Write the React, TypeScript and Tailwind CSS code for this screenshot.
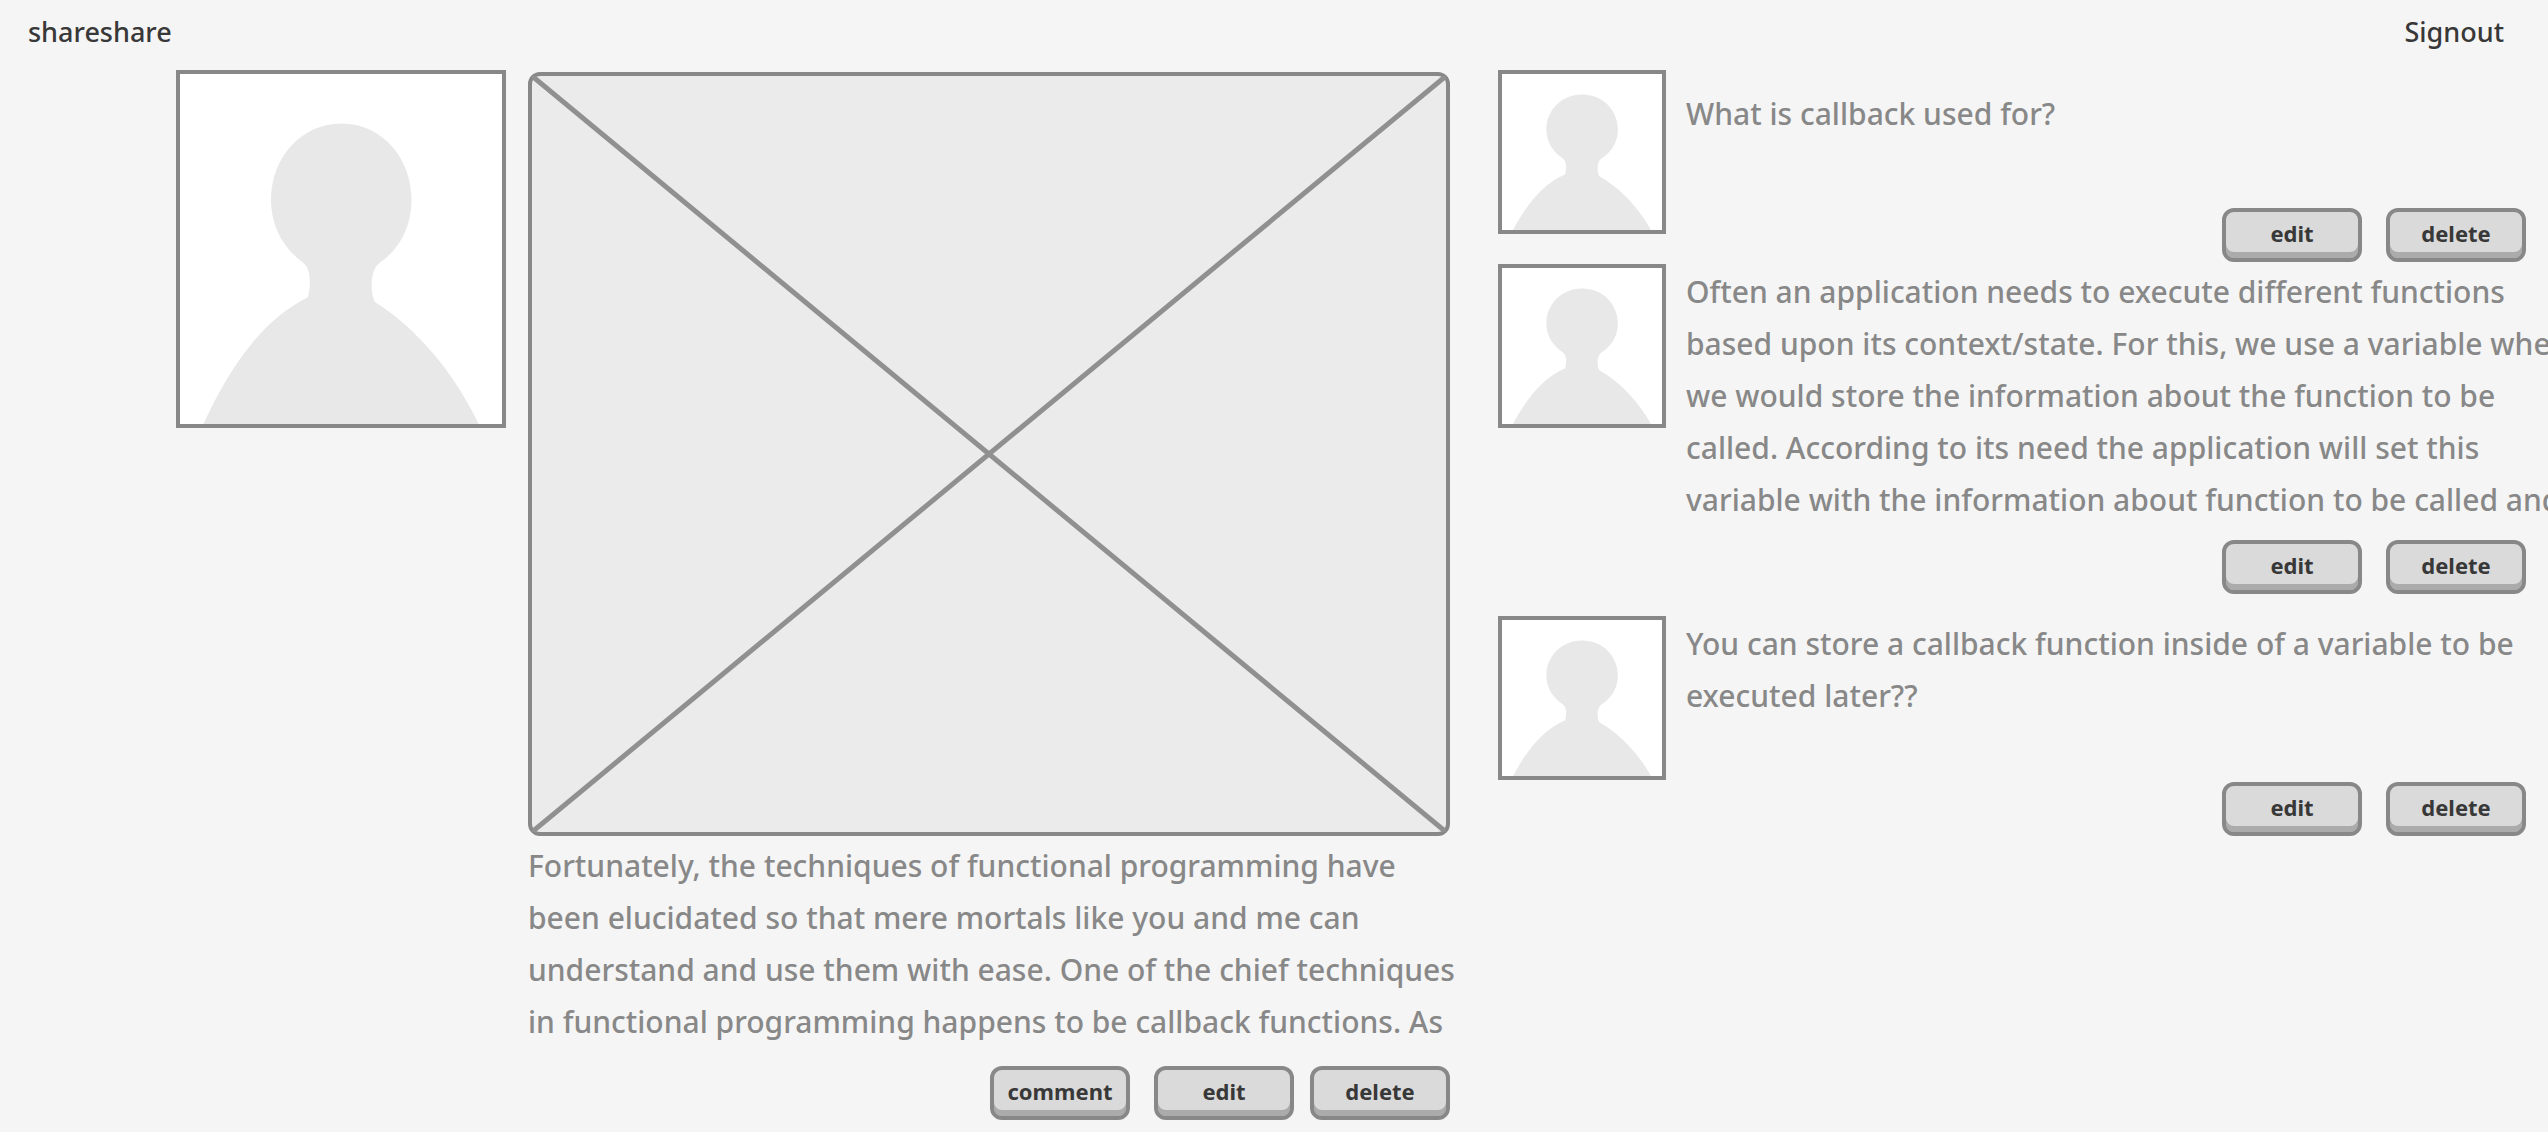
import type { ReactNode } from "react";
import clsx from "clsx";

type Comment = {
  text: string;
  articleClass: string;
  textClass: string;
};

const postText = `Fortunately, the techniques of functional programming have
been elucidated so that mere mortals like you and me can
understand and use them with ease. One of the chief techniques
in functional programming happens to be callback functions. As`;

const comments: Comment[] = [
  {
    text: "What is callback used for?",
    articleClass: "min-h-[192px] mb-0.5",
    textClass: "pt-[18px]",
  },
  {
    text: `Often an application needs to execute different functions
based upon its context/state. For this, we use a variable where
we would store the information about the function to be
called. According to its need the application will set this
variable with the information about function to be called and`,
    articleClass: "mb-[22px]",
    textClass: "pt-0.5 pb-3.5",
  },
  {
    text: `You can store a callback function inside of a variable to be
executed later??`,
    articleClass: "min-h-[220px]",
    textClass: "pt-0.5",
  },
];

function Avatar({ className }: { className: string }) {
  return (
    <svg
      role="img"
      aria-label="User avatar"
      viewBox="0 0 330 358"
      preserveAspectRatio="none"
      className={clsx("block shrink-0 bg-white", className)}
    >
      <path
        fill="#e8e8e8"
        d="M165.500 53.500C206 53.500 235.500 88 235.500 130C235.500 157 223.500 179 204 192.500C194 199 194 222 198.800 232C238 256 279 302 304.500 358H25.500C54 296 86 250 132 227.300C135 214 135 199 127 192.500C108 179 95 157 95 130C95 88 125 53.500 165.500 53.500Z"
      />
      <rect
        width="330"
        height="358"
        fill="none"
        stroke="#888888"
        strokeWidth="8"
        vectorEffect="non-scaling-stroke"
      />
    </svg>
  );
}

function ImagePlaceholder() {
  return (
    <div className="mt-0.5 aspect-[922/764] w-full rounded-xl border-4 border-[#888888] bg-[#ebebeb]">
      <svg
        role="img"
        aria-label="Post image"
        viewBox="0 0 100 100"
        preserveAspectRatio="none"
        className="block h-full w-full"
      >
        <path
          d="M0 0L100 100M100 0L0 100"
          fill="none"
          stroke="#909090"
          strokeWidth="5"
          vectorEffect="non-scaling-stroke"
        />
      </svg>
    </div>
  );
}

function ActionButton({ children, className }: { children: ReactNode; className?: string }) {
  return (
    <button
      type="button"
      className={clsx(
        "flex h-[54px] w-[140px] items-center justify-center rounded-xl border-4 border-[#888888] bg-[#dadada] pb-1 text-[22px] leading-none font-bold text-[#383838] shadow-[inset_0_-6px_0_#ababab]",
        className,
      )}
    >
      {children}
    </button>
  );
}

function CommentItem({ comment }: { comment: Comment }) {
  return (
    <article className={clsx("flex gap-5", comment.articleClass)}>
      <Avatar className="h-[164px] w-[168px]" />
      <div className="flex min-w-0 flex-1 flex-col">
        <p
          className={clsx(
            "text-[30px] leading-[52px] font-medium whitespace-pre text-[#888888]",
            comment.textClass,
          )}
        >
          {comment.text}
        </p>
        <div className="mt-auto flex justify-end gap-6 pr-[22px]">
          <ActionButton>edit</ActionButton>
          <ActionButton>delete</ActionButton>
        </div>
      </div>
    </article>
  );
}

export default function App() {
  return (
    <div className="min-h-screen overflow-hidden bg-[#f5f5f5] font-['Noto_Sans',sans-serif]">
      <header className="flex h-16 items-center justify-between pr-11 pl-7 text-[27px] font-medium text-[#383838]">
        <a href="#home">shareshare</a>
        <a href="#signout">Signout</a>
      </header>
      <main className="mt-1.5 flex items-start pl-44">
        <Avatar className="mr-[22px] h-[358px] w-[330px]" />
        <article className="mr-12 min-w-0 flex-[922]">
          <ImagePlaceholder />
          <p className="mt-1 text-[30px] leading-[52px] font-medium whitespace-pre text-[#888888]">
            {postText}
          </p>
          <div className="mt-[18px] flex justify-end">
            <ActionButton className="mr-6">comment</ActionButton>
            <ActionButton className="mr-4">edit</ActionButton>
            <ActionButton>delete</ActionButton>
          </div>
        </article>
        <section aria-label="Comments" className="min-w-0 flex-[1050]">
          {comments.map((comment) => (
            <CommentItem key={comment.text} comment={comment} />
          ))}
        </section>
      </main>
    </div>
  );
}
